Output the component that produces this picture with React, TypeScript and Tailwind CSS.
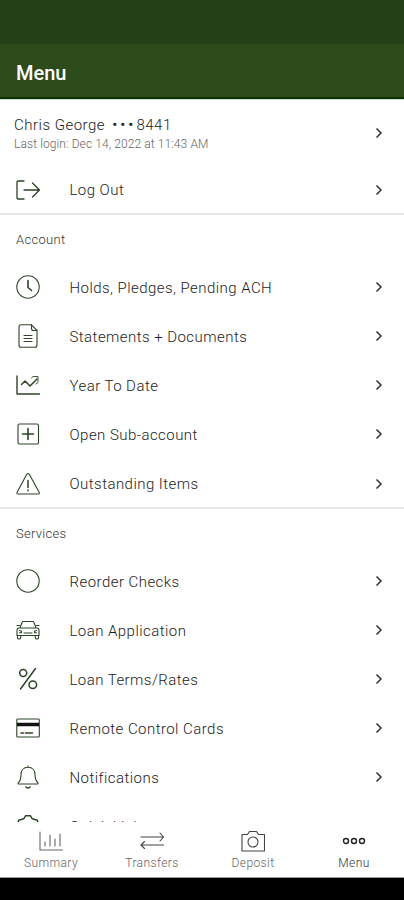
import React from 'react';

interface IconProps {
  children: React.ReactNode;
  className?: string;
}

const Icon: React.FC<IconProps> = ({ children, className = 'text-[#2c4426]' }) => (
  <svg
    className={`w-6 h-6 shrink-0 ${className}`}
    viewBox="0 0 24 24"
    fill="none"
    stroke="currentColor"
    strokeWidth="1.1"
    strokeLinecap="round"
    strokeLinejoin="round"
  >
    {children}
  </svg>
);

const icons = {
  logout: (
    <Icon>
      <path d="M8 3H2a1 1 0 0 0-1 1v16a1 1 0 0 0 1 1H8M8 12h15M16.500 5l7 7-7 7" strokeWidth="1.300" />
    </Icon>
  ),
  clock: (
    <Icon>
      <circle cx="12" cy="12" r="11.2" />
      <path d="M12 5.500v7l3.500 3" strokeWidth="1.6" />
    </Icon>
  ),
  document: (
    <Icon>
      <path d="M15.5.8H5a2 2 0 0 0-2 2v18.4a2 2 0 0 0 2 2h14a2 2 0 0 0 2-2V6.500z" />
      <path d="M15.500.8v3.7a2 2 0 0 0 2 2H21" />
      <path d="M8 11.500h8M8 14.500h8M8 17.500h8" />
    </Icon>
  ),
  chart: (
    <Icon>
      <path d="M1 3v18h22.500" strokeWidth="1.4" />
      <path d="M5.500 11.500l3.500-3.500 5 5 7-7" strokeWidth="1.500" />
      <path d="M15.500 5l1.500-1.500h5v6l-2 1.500" strokeWidth=".9" />
    </Icon>
  ),
  plus: (
    <Icon>
      <rect x="2" y="2" width="20.500" height="20" rx="1.500" />
      <path d="M12 6.500v11M6.500 12h11" strokeWidth="1.600" />
    </Icon>
  ),
  warning: (
    <Icon>
      <path d="M10.800 2.200 1 20.500a1 1 0 0 0 .9 1.500h20.500a1 1 0 0 0 .9-1.500L13.300 2.200a1.400 1.400 0 0 0-2.500 0z" />
      <path d="M12 8.500v7M12 18v.8" strokeWidth="1.500" />
    </Icon>
  ),
  circle: (
    <Icon>
      <circle cx="12" cy="12" r="11.200" />
    </Icon>
  ),
  car: (
    <Icon>
      <path d="M4 10l2-5.500c.2-.6.600-1 1.200-1h9.600c.6 0 1 .4 1.200 1l2 5.500M1 7.500h2.500M20.500 7.500H23M2.500 10h19c1 0 1.500 1 1.500 2v5.500H1V12c0-1 .5-2 1.500-2z" />
      <path d="M1.500 17.500v2.200c0 .8.700 1.300 1.500 1.300s1.700-.5 1.700-1.300v-2.200M19.300 17.500v2.200c0 .8.700 1.300 1.700 1.300s1.500-.5 1.500-1.300v-2.200M3.500 12.500l2 .8v1.500h-2M20.500 12.500l-2 .8v1.500h2M8 15h8" />
    </Icon>
  ),
  percent: (
    <Icon>
      <path d="M19.500 1.500 4.500 22" strokeWidth="1.500" />
      <circle cx="7.200" cy="6" r="3.500" strokeWidth="1.500" />
      <circle cx="16.800" cy="17.800" r="3.800" strokeWidth="1.500" />
    </Icon>
  ),
  card: (
    <Icon>
      <rect x=".8" y="3" width="22.500" height="18" rx="1" />
      <path d="M1 8.500h22" stroke="#111" strokeWidth="3.500" strokeLinecap="butt" />
      <path d="M5 17h2.500M9.500 17h7" strokeWidth="1.500" />
    </Icon>
  ),
  bell: (
    <Icon>
      <path d="M12 .8v1.500M12 2.300c-4.800 0-7 3.500-7 7.200 0 5-1.300 7-2.700 8.200-.5.500-.3 1.300.5 1.300h18.500c.8 0 1-.8.500-1.300-1.700-1.700-2.800-3.700-2.800-8.200 0-3.700-2.200-7.200-7-7.200z" />
      <path d="M10 22c.5 1.300 3.500 1.300 4 0" strokeWidth="1.600" />
    </Icon>
  ),
  gear: (
    <Icon>
      <path d="M8 3.500 9.500.8h5L16 3.500l2.500 1 2.500.5L22.500 8 21 10l1 2 1.500.5v3l-2 .8L21 18l1 2-2.500 2.500-2.500-1-2.500 1h-5L7 21.500l-2.500 1L2 20l1-2-.5-2.200-2-.8v-3l1.500-.5L3 10 1.500 8 3 5l2.500-.5z" strokeWidth="1.500" />
      <circle cx="12" cy="12.500" r="4.500" />
    </Icon>
  ),
};

const Chevron = () => (
  <svg className="w-2 h-3 shrink-0 text-[#333]" viewBox="0 0 8 12" fill="none" stroke="currentColor" strokeWidth="1.5">
    <path d="M1.500 1.500l4.500 4.500-4.500 4.500" />
  </svg>
);

interface RowProps {
  icon: React.ReactNode;
  label: string;
}

const Row: React.FC<RowProps> = ({ icon, label }) => (
  <button className="flex w-full h-[49.1px] shrink-0 items-center pl-4 pr-[21px] text-left">
    {icon}
    <span className="flex-1 pl-[29.5px] pt-[1.5px] text-[15px] font-light text-[#1c1c1c] tracking-[0.45px]">{label}</span>
    <Chevron />
  </button>
);

const sections = [
  {
    title: 'Account',
    items: [
      { icon: icons.clock, label: 'Holds, Pledges, Pending ACH' },
      { icon: icons.document, label: 'Statements + Documents' },
      { icon: icons.chart, label: 'Year To Date' },
      { icon: icons.plus, label: 'Open Sub-account' },
      { icon: icons.warning, label: 'Outstanding Items' },
    ],
  },
  {
    title: 'Services',
    items: [
      { icon: icons.circle, label: 'Reorder Checks' },
      { icon: icons.car, label: 'Loan Application' },
      { icon: icons.percent, label: 'Loan Terms/Rates' },
      { icon: icons.card, label: 'Remote Control Cards' },
      { icon: icons.bell, label: 'Notifications' },
      { icon: icons.gear, label: 'Quick Links' },
    ],
  },
];

const tabs = [
  {
    label: 'Summary',
    active: false,
    icon: (
      <Icon className="text-[#666]">
        <path d="M1 3v18h22.500M6 17v-4M11 17V6M16 17v-7M21 17V5" />
      </Icon>
    ),
  },
  {
    label: 'Transfers',
    active: false,
    icon: (
      <Icon className="text-[#444]">
        <path d="M1 8h22.500M20 4l3.500 4-3.500 4M23.500 16H1M4.500 12.500 1 16l3.500 3.500" />
      </Icon>
    ),
  },
  {
    label: 'Deposit',
    active: false,
    icon: (
      <Icon className="text-[#444]">
        <path d="M1 5.500h5.500l2-3h7l2 3h6v16.500H1z" />
        <circle cx="12" cy="13" r="5" />
      </Icon>
    ),
  },
  {
    label: 'Menu',
    active: true,
    icon: (
      <Icon className="text-[#222]">
        <circle cx="4" cy="12" r="2.500" strokeWidth="1.400" />
        <circle cx="12" cy="12" r="2.500" strokeWidth="1.400" />
        <circle cx="20" cy="12" r="2.500" strokeWidth="1.400" />
      </Icon>
    ),
  },
];

export default function App() {
  return (
    <div className="flex flex-col w-full h-[900px] overflow-hidden bg-white font-['Roboto',sans-serif]">
      <div className="h-11 shrink-0 bg-[#234115]" />
      <header className="flex items-center h-[55px] shrink-0 px-4 pt-1 bg-[#2d4a1b] border-b-2 border-[#0d2f05]">
        <h1 className="text-[20px] font-medium text-white">Menu</h1>
      </header>

      <main className="flex flex-col h-[723px] shrink-0 overflow-hidden border-t border-[#cbdcd2]">
        <button className="flex h-[65px] shrink-0 items-center pl-3.5 pr-[21px] text-left">
          <div className="flex-1 pt-[3px]">
            <p className="text-[15px] leading-[19px] font-light text-[#1c1c1c] tracking-[0.5px]">
              Chris George <span className="pl-[3px] font-normal tracking-[3px]">•••</span>8441
            </p>
            <p className="text-[12px] leading-[18px] font-light text-[#666] tracking-[0.1px]">Last login: Dec 14, 2022 at 11:43 AM</p>
          </div>
          <Chevron />
        </button>
        <Row icon={icons.logout} label="Log Out" />
        {sections.map((section) => (
          <section key={section.title} className="-mt-px shrink-0 border-t-2 border-[#e6e6e6]">
            <h2 className="h-[47.5px] pl-4 pt-4 text-[13px] leading-[18px] font-light text-[#333] tracking-[0.3px]">{section.title}</h2>
            {section.items.map((item) => (
              <Row key={item.label} icon={item.icon} label={item.label} />
            ))}
          </section>
        ))}
      </main>

      <nav className="grid grid-cols-4 h-14 shrink-0 border-b border-[#999]">
        {tabs.map((tab) => (
          <button key={tab.label} className="flex flex-col items-center pt-[7px] pl-px">
            {tab.icon}
            <span className={`pt-px text-[12px] leading-[18px] tracking-[0.4px] font-light ${tab.active ? 'text-[#333]' : 'text-[#666]'}`}>
              {tab.label}
            </span>
          </button>
        ))}
      </nav>
      <div className="flex-1 bg-black" />
    </div>
  );
}
